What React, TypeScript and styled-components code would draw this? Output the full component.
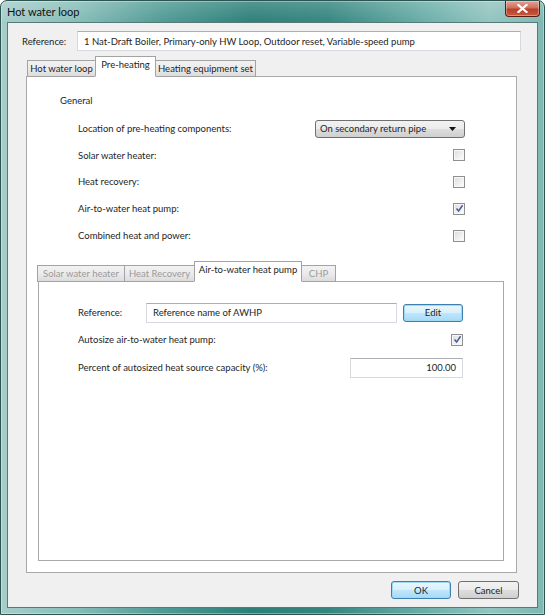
import React from "react";
import styled, { createGlobalStyle, css } from "styled-components";

const Global = createGlobalStyle`
  html, body { margin: 0; padding: 0; background: #ffffff; }
  body {
    font-family: Lato, "Open Sans", sans-serif;
    font-size: 9.5px;
    color: #1e1e1e;
  }
  * { box-sizing: border-box; }
`;

/* ---------- window chrome ---------- */

const Window = styled.div`
  width: 545px;
  height: 615px;
  border: 1px solid #2c5552;
  border-radius: 7px 7px 0 0;
  padding: 0 6px 6px 6px;
  display: flex;
  flex-direction: column;
  background:
    linear-gradient(180deg, rgba(255,255,255,0.18) 0px, rgba(255,255,255,0) 22px),
    linear-gradient(90deg, #a6cdca 0%, #86bdb8 14%, #4f9a94 30%, #2d7f79 46%, #35857f 60%, #6aaea8 78%, #92c4c0 90%, #7fb7b2 100%);
  box-shadow: inset 0 0 0 1px rgba(255,255,255,0.35);
`;

const TitleBar = styled.div`
  height: 21px;
  display: flex;
  align-items: flex-start;
  justify-content: space-between;
`;

const Title = styled.span`
  font-size: 11px;
  line-height: 21px;
  color: #101010;
`;

const CloseButton = styled.div`
  width: 35px;
  height: 16px;
  margin-right: -2px;
  border: 1px solid #5a1d14;
  border-top: none;
  border-radius: 0 0 4px 4px;
  background: linear-gradient(180deg, #e6a193 0%, #d0705d 45%, #b8402a 55%, #c75a3e 100%);
  box-shadow: inset 0 0 0 1px rgba(255,255,255,0.35);
  display: flex;
  align-items: center;
  justify-content: center;
`;

const Client = styled.div`
  flex: 1;
  display: flex;
  flex-direction: column;
  border: 1px solid #557a77;
  background: #f0f0f0;
`;

/* ---------- inputs ---------- */

const TextField = styled.div<{ $w?: number; $align?: string }>`
  ${(p) => (p.$w ? `width: ${p.$w}px;` : "flex: 1;")}
  height: 20px;
  background: #ffffff;
  border: 1px solid #d6dadf;
  border-top-color: #acaeb3;
  padding: 0 6px;
  display: flex;
  align-items: center;
  justify-content: ${(p) => p.$align ?? "flex-start"};
  white-space: nowrap;
  overflow: hidden;
`;

const PushButton = styled.div<{ $w: number; $default?: boolean }>`
  width: ${(p) => p.$w}px;
  height: 18px;
  border-radius: 3px;
  border: 1px solid #707070;
  background: linear-gradient(180deg, #f2f2f2 0%, #ebebeb 48%, #dddddd 52%, #cfcfcf 100%);
  display: flex;
  align-items: center;
  justify-content: center;
  ${(p) =>
    p.$default &&
    css`
      border-color: #3c7fb1;
      box-shadow: inset 0 0 0 1px #9fd9f4;
      background: linear-gradient(180deg, #eaf6fd 0%, #d9f0fc 48%, #bee6fd 52%, #a7d9f5 100%);
    `}
`;

const Combo = styled.div`
  width: 150px;
  height: 18px;
  border-radius: 3px;
  border: 1px solid #707070;
  background: linear-gradient(180deg, #f2f2f2 0%, #ebebeb 48%, #dddddd 52%, #cfcfcf 100%);
  display: flex;
  align-items: center;
  justify-content: space-between;
  padding: 0 8px 0 4px;
`;

const CheckBox = styled.div`
  width: 12px;
  height: 12px;
  border: 1px solid #8e8f8f;
  background: linear-gradient(135deg, #dcdcdc 0%, #f4f4f4 70%, #ffffff 100%);
  box-shadow: inset 0 0 0 1px #f7f7f7;
  display: flex;
  align-items: center;
  justify-content: center;
`;

const Check = ({ on }: { on?: boolean }) => (
  <CheckBox>
    {on && (
      <svg width="9" height="9" viewBox="0 0 9 9">
        <path d="M1.5 4.5 L3.6 7 L7.6 1.2" fill="none" stroke="#4a5d9c" strokeWidth="1.5" />
      </svg>
    )}
  </CheckBox>
);

/* ---------- reference row ---------- */

const RefRow = styled.div`
  display: flex;
  align-items: center;
  margin: 8px 16px 0 14px;
`;

const Label = styled.span<{ $w?: number }>`
  ${(p) => (p.$w ? `width: ${p.$w}px;` : "")}
  flex: none;
  white-space: nowrap;
`;

/* ---------- tabs ---------- */

const TabStrip = styled.div<{ $ml: number; $h: number; $mt?: number }>`
  display: flex;
  align-items: flex-end;
  height: ${(p) => p.$h}px;
  margin-left: ${(p) => p.$ml}px;
  margin-top: ${(p) => p.$mt ?? 0}px;
  position: relative;
  z-index: 1;
`;

const Tab = styled.div<{ $w: number; $active?: boolean; $disabled?: boolean }>`
  width: ${(p) => p.$w}px;
  height: 17px;
  margin-bottom: -1px;
  border: 1px solid #a3a3a3;
  border-right-width: 0;
  background: linear-gradient(180deg, #f2f2f2 0%, #ebebeb 50%, #dcdcdc 100%);
  display: flex;
  align-items: center;
  justify-content: center;
  white-space: nowrap;
  color: ${(p) => (p.$disabled ? "#9a9a9a" : "#1e1e1e")};
  &:last-child { border-right-width: 1px; }
  ${(p) =>
    p.$active &&
    css`
      height: 21px;
      background: #ffffff;
      border-right-width: 1px;
      border-bottom-color: #ffffff;
      align-items: flex-start;
      padding-top: 2px;
      & + div { border-left-width: 0; }
    `}
`;

const Panel = styled.div<{ $inner?: boolean }>`
  background: #ffffff;
  border: 1px solid #a9a9a9;
  display: flex;
  flex-direction: column;
  flex: 1;
  ${(p) =>
    p.$inner
      ? css`
          width: 466px;
          margin: 0 0 11px 11px;
          padding: 17px 40px 0 39px;
        `
      : css`
          width: 491px;
          margin-left: 18px;
        `}
`;

/* ---------- option rows ---------- */

const SectionTitle = styled.div`
  margin: 17px 0 0 33px;
  line-height: 14px;
`;

const OptionList = styled.div`
  margin: 7px 51px 14px 51px;
  display: flex;
  flex-direction: column;
`;

const OptionRow = styled.div<{ $h: number }>`
  height: ${(p) => p.$h}px;
  display: flex;
  align-items: center;
  justify-content: space-between;
`;

const FieldGroup = styled.div`
  display: flex;
  align-items: center;
  gap: 5px;
`;

const ButtonRow = styled.div`
  display: flex;
  justify-content: flex-end;
  gap: 7px;
  margin: 8px 18px 8px 0;
`;

export default function App() {
  return (
    <>
      <Global />
      <Window>
        <TitleBar>
          <Title>Hot water loop</Title>
          <CloseButton>
            <svg width="11" height="9" viewBox="0 0 11 9">
              <path d="M1.5 1 L9.5 8 M9.5 1 L1.5 8" stroke="#ffffff" strokeWidth="2.2" strokeLinecap="square" />
            </svg>
          </CloseButton>
        </TitleBar>
        <Client>
          <RefRow>
            <Label $w={55}>Reference:</Label>
            <TextField>1 Nat-Draft Boiler, Primary-only HW Loop, Outdoor reset, Variable-speed pump</TextField>
          </RefRow>

          <TabStrip $ml={19} $h={20} $mt={5}>
            <Tab $w={68}>Hot water loop</Tab>
            <Tab $w={61} $active>Pre-heating</Tab>
            <Tab $w={100}>Heating equipment set</Tab>
          </TabStrip>

          <Panel>
            <SectionTitle>General</SectionTitle>
            <OptionList>
              <OptionRow $h={27}>
                <Label>Location of pre-heating components:</Label>
                <Combo>
                  <span>On secondary return pipe</span>
                  <svg width="7" height="4" viewBox="0 0 7 4">
                    <path d="M0 0 H7 L3.5 4 Z" fill="#111" />
                  </svg>
                </Combo>
              </OptionRow>
              <OptionRow $h={26.5}>
                <Label>Solar water heater:</Label>
                <Check />
              </OptionRow>
              <OptionRow $h={26.5}>
                <Label>Heat recovery:</Label>
                <Check />
              </OptionRow>
              <OptionRow $h={27}>
                <Label>Air-to-water heat pump:</Label>
                <Check on />
              </OptionRow>
              <OptionRow $h={27}>
                <Label>Combined heat and power:</Label>
                <Check />
              </OptionRow>
            </OptionList>

            <TabStrip $ml={10} $h={18}>
              <Tab $w={87} $disabled>Solar water heater</Tab>
              <Tab $w={70} $disabled>Heat Recovery</Tab>
              <Tab $w={108} $active>Air-to-water heat pump</Tab>
              <Tab $w={34} $disabled>CHP</Tab>
            </TabStrip>

            <Panel $inner>
              <OptionRow $h={27}>
                <FieldGroup>
                  <Label $w={63}>Reference:</Label>
                  <TextField $w={251}>Reference name of AWHP</TextField>
                </FieldGroup>
                <PushButton $w={60} $default>Edit</PushButton>
              </OptionRow>
              <OptionRow $h={27.5}>
                <Label>Autosize air-to-water heat pump:</Label>
                <Check on />
              </OptionRow>
              <OptionRow $h={28}>
                <Label>Percent of autosized heat source capacity (%):</Label>
                <TextField $w={113} $align="flex-end">100.00</TextField>
              </OptionRow>
            </Panel>
          </Panel>

          <ButtonRow>
            <PushButton $w={60} $default>OK</PushButton>
            <PushButton $w={61}>Cancel</PushButton>
          </ButtonRow>
        </Client>
      </Window>
    </>
  );
}
